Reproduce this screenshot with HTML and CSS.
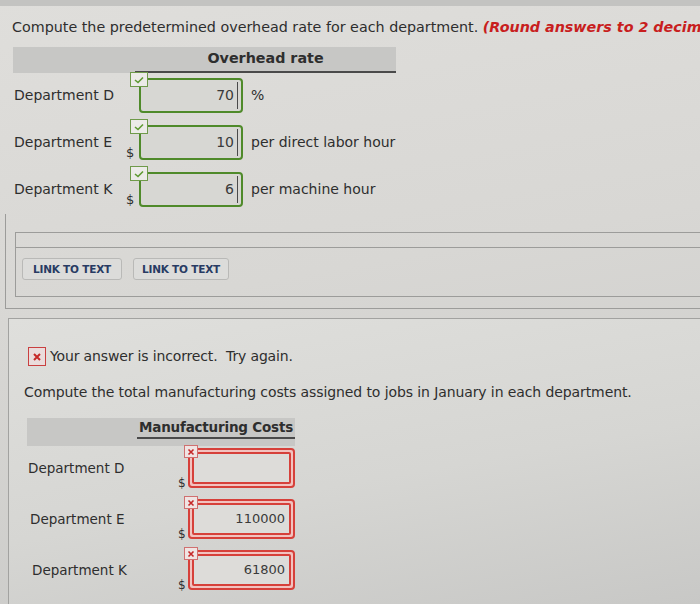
FILE: index.html
```html
<!DOCTYPE html>
<html lang="en">
<head>
    <meta charset="UTF-8">
    <meta name="viewport" content="width=device-width, initial-scale=1.0">
    <title>Overhead rate</title>
    <link rel="stylesheet" href="styles.css">
</head>
<body>
    <div class="topbar"></div>

    <div class="part">
        <p class="prompt">Compute the predetermined overhead rate for each department. <em class="hint">(Round answers to 2 decimal places, e.g. 12.25%.)</em></p>

        <div class="table rate">
            <div class="table-head">
                <span class="head-blank"></span>
                <span class="head-title">Overhead rate</span>
            </div>

            <div class="table-row">
                <span class="dept">Department D</span>
                <div class="answer">
                    <span class="cur"></span>
                    <div class="field ok">
                        <span class="badge ok-badge"><svg width="10" height="8" viewBox="0 0 10 8"><polyline points="1,4 4,6.5 9,1.5" fill="none" stroke="#5f9a32" stroke-width="1.6"/></svg></span>
                        <span class="value">70</span>
                    </div>
                    <span class="unit">%</span>
                </div>
            </div>

            <div class="table-row">
                <span class="dept">Department E</span>
                <div class="answer">
                    <span class="cur">$</span>
                    <div class="field ok">
                        <span class="badge ok-badge"><svg width="10" height="8" viewBox="0 0 10 8"><polyline points="1,4 4,6.5 9,1.5" fill="none" stroke="#5f9a32" stroke-width="1.6"/></svg></span>
                        <span class="value">10</span>
                    </div>
                    <span class="unit">per direct labor hour</span>
                </div>
            </div>

            <div class="table-row">
                <span class="dept">Department K</span>
                <div class="answer">
                    <span class="cur">$</span>
                    <div class="field ok">
                        <span class="badge ok-badge"><svg width="10" height="8" viewBox="0 0 10 8"><polyline points="1,4 4,6.5 9,1.5" fill="none" stroke="#5f9a32" stroke-width="1.6"/></svg></span>
                        <span class="value">6</span>
                    </div>
                    <span class="unit">per machine hour</span>
                </div>
            </div>
        </div>

        <div class="links-wrap">
            <div class="links">
                <div class="links-strip"></div>
                <div class="links-body">
                    <button class="link-btn">LINK TO TEXT</button>
                    <button class="link-btn">LINK TO TEXT</button>
                </div>
            </div>
        </div>
    </div>

    <div class="part2">
        <p class="feedback">
            <span class="x-box"><svg width="10" height="10" viewBox="0 0 10 10"><path d="M2 2 L8 8 M8 2 L2 8" stroke="#c62828" stroke-width="2"/></svg></span>
            Your answer is incorrect.&nbsp; Try again.
        </p>
        <p class="prompt2">Compute the total manufacturing costs assigned to jobs in January in each department.</p>

        <div class="table costs">
            <div class="table-head">
                <span class="head-blank"></span>
                <span class="head-title">Manufacturing Costs</span>
            </div>

            <div class="table-row">
                <span class="dept">Department D</span>
                <div class="answer">
                    <span class="cur">$</span>
                    <div class="field bad">
                        <span class="badge bad-badge"><svg width="8" height="8" viewBox="0 0 8 8"><path d="M1.5 1.5 L6.5 6.5 M6.5 1.5 L1.5 6.5" stroke="#c62828" stroke-width="1.6"/></svg></span>
                        <span class="value"></span>
                    </div>
                </div>
            </div>

            <div class="table-row">
                <span class="dept">Department E</span>
                <div class="answer">
                    <span class="cur">$</span>
                    <div class="field bad">
                        <span class="badge bad-badge"><svg width="8" height="8" viewBox="0 0 8 8"><path d="M1.5 1.5 L6.5 6.5 M6.5 1.5 L1.5 6.5" stroke="#c62828" stroke-width="1.6"/></svg></span>
                        <span class="value">110000</span>
                    </div>
                </div>
            </div>

            <div class="table-row">
                <span class="dept">Department K</span>
                <div class="answer">
                    <span class="cur">$</span>
                    <div class="field bad">
                        <span class="badge bad-badge"><svg width="8" height="8" viewBox="0 0 8 8"><path d="M1.5 1.5 L6.5 6.5 M6.5 1.5 L1.5 6.5" stroke="#c62828" stroke-width="1.6"/></svg></span>
                        <span class="value">61800</span>
                    </div>
                </div>
            </div>
        </div>
    </div>
</body>
</html>
```

FILE: styles.css
```css
html, body {
    margin: 0;
    padding: 0;
    height: 100%;
    overflow: hidden;
}

body {
    font-family: "DejaVu Sans", Verdana, sans-serif;
    color: #2e2e2e;
    background: linear-gradient(170deg, #dfdedb 0%, #d8d7d4 45%, #c9c9c7 100%);
    display: flex;
    flex-direction: column;
}

.topbar {
    flex: none;
    height: 6px;
    background: #c3c3c1;
}

.part {
    flex: none;
}

.prompt {
    margin: 0;
    padding: 13px 0 0 12px;
    font-size: 14.3px;
    line-height: 17px;
    white-space: nowrap;
    overflow: hidden;
}

.hint {
    color: #c81e1e;
    font-weight: bold;
}

/* answer tables */
.table-head {
    display: flex;
    background: #c7c7c5;
}

.head-title {
    font-weight: bold;
    text-align: center;
    border-bottom: 2px solid #4a4a4a;
}

.table-row {
    display: flex;
}

.answer {
    display: flex;
    align-items: flex-end;
}

.cur {
    flex: none;
    line-height: 14px;
}

.field {
    position: relative;
    flex: none;
    box-sizing: border-box;
    display: flex;
    border-radius: 4px;
}

.value {
    flex: 1;
    text-align: right;
    color: #3a3a3a;
    box-sizing: border-box;
}

.badge {
    position: absolute;
    display: flex;
    align-items: center;
    justify-content: center;
    box-sizing: border-box;
    background: #ecebe8;
}

.unit {
    align-self: center;
    margin-left: 8px;
    white-space: nowrap;
}

/* overhead rate table */
.rate {
    margin: 11px 0 0 13px;
    width: 383px;
    font-size: 14px;
}

.rate .table-head {
    height: 26px;
}

.rate .head-blank {
    width: 122px;
}

.rate .head-title {
    flex: 1;
    line-height: 22px;
    height: 24px;
    font-size: 14.3px;
}

.rate .table-row {
    height: 47px;
    align-items: flex-start;
}

.rate .dept {
    width: 112px;
    margin-top: 14px;
    padding-left: 1px;
}

.rate .cur {
    width: 13px;
    font-size: 13px;
}

.field.ok {
    width: 104px;
    height: 35px;
    margin-top: 5px;
    border: 2px solid #4f8a2a;
    background: #d7d7d3;
    padding: 2px 3px 2px 2px;
}

.field.ok .value {
    line-height: 27px;
    padding-right: 3px;
    border-right: 1.5px solid #4a4a4a;
}

.ok-badge {
    left: -11px;
    top: -8px;
    width: 18px;
    height: 15px;
    border: 1px solid #6f9a4a;
}

.rate .unit {
    margin-top: 5px;
    height: 35px;
    line-height: 35px;
}

/* link buttons */
.links-wrap {
    margin-left: 5px;
    padding: 18px 0 11px 9px;
    border-left: 1px solid #9c9c9a;
    border-bottom: 1px solid #9c9c9a;
}

.links {
    border-top: 1px solid #9c9c9a;
    border-left: 1px solid #9c9c9a;
    border-bottom: 1px solid #9c9c9a;
}

.links-strip {
    height: 14px;
    border-bottom: 1px solid #9c9c9a;
}

.links-body {
    display: flex;
    gap: 11px;
    padding: 10px 0 16px 6px;
}

.link-btn {
    font-family: "DejaVu Sans", Verdana, sans-serif;
    font-size: 10.5px;
    font-weight: bold;
    color: #283b63;
    background: #dcdcda;
    border: 1px solid #b9b9b7;
    border-radius: 3px;
    height: 22px;
    padding: 0;
    white-space: nowrap;
    letter-spacing: -0.2px;
}

.link-btn:first-child {
    width: 100px;
}

.link-btn + .link-btn {
    width: 96px;
}

/* second part */
.part2 {
    flex: 1;
    margin: 9px 0 0 8px;
    padding: 28px 0 0 18px;
    border-top: 1px solid #a2a2a0;
    border-left: 1px solid #a2a2a0;
    background: linear-gradient(170deg, #dfdfdc 0%, #d6d6d3 55%, #c8c8c6 100%);
}

.feedback {
    margin: 0 0 0 1px;
    display: flex;
    align-items: center;
    gap: 4px;
    font-size: 14px;
    line-height: 19px;
    letter-spacing: -0.15px;
}

.x-box {
    width: 18px;
    height: 19px;
    box-sizing: border-box;
    border: 1px solid #c94040;
    background: #eadcdc;
    display: flex;
    align-items: center;
    justify-content: center;
}

.prompt2 {
    margin: 18px 0 0 -3px;
    font-size: 14px;
    line-height: 17px;
    white-space: nowrap;
    letter-spacing: -0.1px;
}

.costs {
    margin-top: 17px;
    width: 268px;
    font-size: 13.5px;
}

.costs .table-head {
    height: 28px;
    align-items: flex-start;
}

.costs .head-blank {
    width: 110px;
}

.costs .head-title {
    flex: 1;
    height: 19px;
    line-height: 18px;
    font-size: 13.5px;
    letter-spacing: -0.2px;
}

.costs .table-row {
    height: 51px;
    align-items: flex-start;
}

.costs .dept {
    width: 151px;
    margin-top: 14px;
    padding-left: 1px;
}

.costs .table-row:nth-child(3) .dept {
    padding-left: 3px;
    width: 149px;
}

.costs .table-row:nth-child(4) .dept {
    padding-left: 5px;
    width: 147px;
}

.costs .cur {
    width: 10px;
    font-size: 12px;
    margin-bottom: -2px;
}

.field.bad {
    width: 107px;
    height: 40px;
    margin-top: 2px;
    border: 2px solid #d6403a;
    background: #f2c2bf;
    padding: 2px;
}

.field.bad .value {
    line-height: 28px;
    padding-right: 4px;
    border: 2px solid #d6403a;
    border-radius: 2px;
    background: #dddcd9;
    font-size: 13px;
}

.bad-badge {
    left: -6px;
    top: -5px;
    width: 14px;
    height: 13px;
    border: 1px solid #d07070;
    background: #f0e4e3;
}
```
